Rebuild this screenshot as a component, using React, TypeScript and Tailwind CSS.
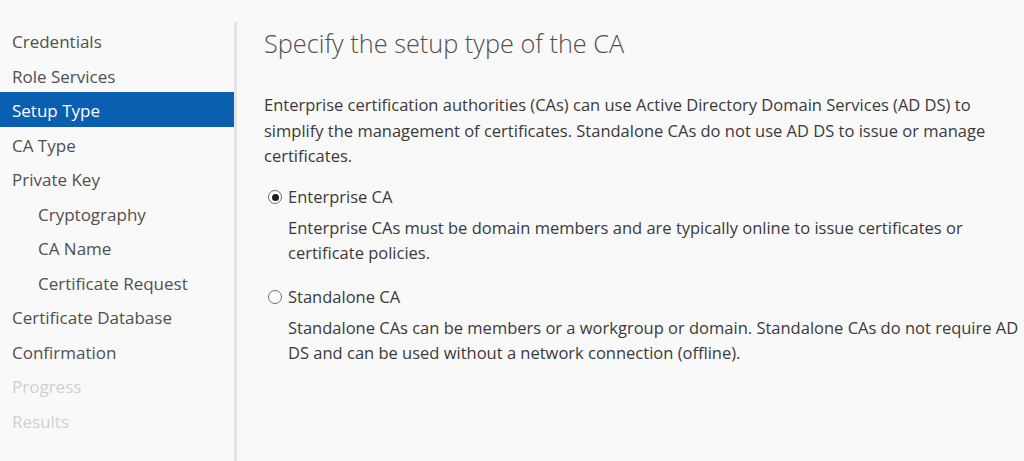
import React from 'react';

const steps = [
  { label: 'Credentials' },
  { label: 'Role Services' },
  { label: 'Setup Type', active: true },
  { label: 'CA Type' },
  { label: 'Private Key' },
  { label: 'Cryptography', sub: true },
  { label: 'CA Name', sub: true },
  { label: 'Certificate Request', sub: true },
  { label: 'Certificate Database' },
  { label: 'Confirmation' },
  { label: 'Progress', disabled: true },
  { label: 'Results', disabled: true },
];

function Radio({ checked }: { checked?: boolean }) {
  return (
    <span className="flex h-[14px] w-[14px] shrink-0 items-center justify-center rounded-full border border-[#6b6b6b] bg-white">
      {checked && <span className="h-[7px] w-[7px] rounded-full bg-[#1f1f1f]" />}
    </span>
  );
}

export default function App() {
  return (
    <div
      className="flex h-[461px] w-[1024px] overflow-hidden bg-[#f9f9f9] text-[#3a3a3a]"
      style={{ fontFamily: '"Open Sans", "Noto Sans", sans-serif' }}
    >
      {/* step list */}
      <div className="w-[234px] shrink-0 pt-[23px]">
        {steps.map((s) => (
          <div
            key={s.label}
            className={
              'flex h-[34.5px] items-center pt-[3px] text-[17px] ' +
              (s.sub ? 'pl-[38px] ' : 'pl-[12px] ') +
              (s.active
                ? 'bg-[#0a5fb0] text-white'
                : s.disabled
                ? 'text-[#d0d0d0]'
                : 'text-[#505050]')
            }
          >
            {s.label}
          </div>
        ))}
      </div>

      <div className="mt-[22px] w-[3px] shrink-0 bg-[#e4e4e4]" />

      {/* page content */}
      <div className="flex-1 pl-[27px] pt-[26px]">
        <h1 className="text-[25.3px] font-light leading-[34px] text-[#505050]">
          Specify the setup type of the CA
        </h1>

        <p className="mt-[32px] text-[16.5px] leading-[25.5px]">
          Enterprise certification authorities (CAs) can use Active Directory Domain Services (AD DS) to
          simplify the management of certificates. Standalone CAs do not use AD DS to issue or manage
          certificates.
        </p>

        <div className="mt-[16px] flex flex-col gap-[19px]">
          <div>
            <label className="flex h-[25px] items-center gap-[6px] pl-[4px] text-[16.5px]">
              <Radio checked />
              Enterprise CA
            </label>
            <p className="mt-[5px] pl-[24px] text-[16.5px] leading-[25.5px]">
              Enterprise CAs must be domain members and are typically online to issue certificates or
              certificate policies.
            </p>
          </div>
          <div>
            <label className="flex h-[25px] items-center gap-[6px] pl-[4px] text-[16.5px]">
              <Radio />
              Standalone CA
            </label>
            <p className="mt-[5px] pl-[24px] text-[16.5px] leading-[25.5px]">
              Standalone CAs can be members or a workgroup or domain. Standalone CAs do not require AD
              DS and can be used without a network connection (offline).
            </p>
          </div>
        </div>
      </div>
    </div>
  );
}
